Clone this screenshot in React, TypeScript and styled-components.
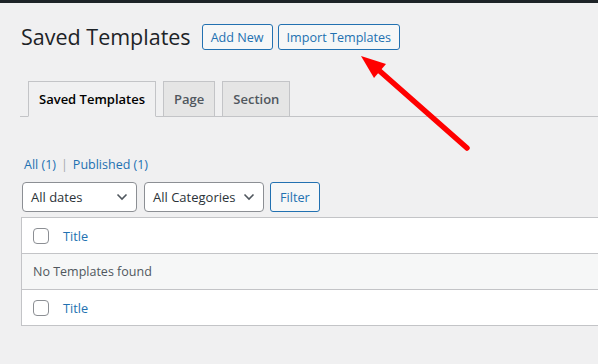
import React from "react";
import styled, { createGlobalStyle, css } from "styled-components";

const Global = createGlobalStyle`
  html, body { margin: 0; padding: 0; background: #f0f0f1; overflow: hidden; }
  body { font-family: "Open Sans", "Noto Sans", sans-serif; color: #3c434a; font-size: 13px; }
  * { box-sizing: border-box; }
`;

const Page = styled.div`
  position: relative;
  width: 598px;
  height: 364px;
  overflow: hidden;
`;

const AdminBar = styled.div`
  height: 3px;
  background: #1d2327;
`;

const Wrap = styled.div`
  padding-left: 20px;
  margin-right: -20px;
`;

const Header = styled.div`
  display: flex;
  align-items: center;
  padding-top: 19px;
  height: 49px;
`;

const Title = styled.h1`
  margin: 0 11px 0 1px;
  font-size: 21.5px;
  font-weight: 400;
  line-height: 30px;
  color: #1d2327;
`;

const ActionButton = styled.a`
  display: inline-flex;
  align-items: center;
  height: 26px;
  padding: 0 8px;
  margin-right: 5px;
  border: 1px solid #2271b1;
  border-radius: 3px;
  background: #f6f7f7;
  color: #2271b1;
  font-size: 12.6px;
  font-weight: 500;
  text-decoration: none;
`;

const Tabs = styled.nav`
  display: flex;
  align-items: flex-end;
  gap: 7px;
  margin-top: 29px;
  padding-left: 8px;
  border-bottom: 1px solid #c3c4c7;
`;

const Tab = styled.a<{ $active?: boolean }>`
  display: block;
  padding: 5px 10px;
  margin-bottom: -1px;
  line-height: 24px;
  font-size: 13px;
  font-weight: 600;
  border: 1px solid #c3c4c7;
  background: #e5e5e5;
  color: #50575e;
  ${(p) =>
    p.$active &&
    css`
      background: #f0f0f1;
      border-bottom-color: #f0f0f1;
      color: #000;
    `}
`;

const SubSubSub = styled.ul`
  list-style: none;
  display: flex;
  align-items: center;
  margin: 38px 0 0 4px;
  padding: 0;
  font-size: 12.5px;
  line-height: 20px;
  color: #2271b1;
`;

const Sep = styled.span`
  color: #a7aaad;
  margin: 0 5px;
`;

const FilterRow = styled.div`
  display: flex;
  align-items: center;
  gap: 7px;
  margin: 7px 0 0 2px;
`;

const Select = styled.div<{ $w: number }>`
  display: flex;
  align-items: center;
  justify-content: space-between;
  width: ${(p) => p.$w}px;
  height: 30px;
  padding: 0 8px 0 8px;
  border: 1px solid #8c8f94;
  border-radius: 4px;
  background: #fff;
  color: #2c3338;
  font-size: 13px;
`;

const FilterButton = styled.button`
  height: 30px;
  padding: 0 9px;
  border: 1px solid #2271b1;
  border-radius: 3px;
  background: #f6f7f7;
  color: #2271b1;
  font-family: inherit;
  font-size: 12.7px;
  margin-left: -1px;
`;

const Table = styled.div`
  margin: 5px 0 0 1px;
  border: 1px solid #c3c4c7;
  background: #fff;
`;

const Row = styled.div<{ $alt?: boolean; $top?: boolean }>`
  display: flex;
  align-items: center;
  height: ${(p) => (p.$top ? 36 : 35)}px;
  padding-left: 11px;
  background: ${(p) => (p.$alt ? "#f6f7f7" : "#fff")};
  border-top: ${(p) => (p.$top ? "1px solid #c3c4c7" : "none")};
  color: #50575e;
  font-size: 12.5px;
`;

const Check = styled.span`
  width: 16px;
  height: 16px;
  border: 1px solid #8c8f94;
  border-radius: 4px;
  background: #fff;
  margin-right: 14px;
`;

const ColLink = styled.a`
  color: #2271b1;
  font-size: 12.7px;
`;

const Arrow = styled.svg`
  position: absolute;
  left: 0;
  top: 0;
  pointer-events: none;
`;

const Chevron = () => (
  <svg width="12" height="8" viewBox="0 0 12 8">
    <path d="M1.5 1.5 L6 6 L10.5 1.5" fill="none" stroke="#50575e" strokeWidth="1.6" />
  </svg>
);

export default function App() {
  return (
    <Page>
      <Global />
      <AdminBar />
      <Wrap>
        <Header>
          <Title>Saved Templates</Title>
          <ActionButton>Add New</ActionButton>
          <ActionButton>Import Templates</ActionButton>
        </Header>
        <Tabs>
          <Tab $active>Saved Templates</Tab>
          <Tab>Page</Tab>
          <Tab>Section</Tab>
        </Tabs>
        <SubSubSub>
          <li>All (1)</li>
          <Sep>|</Sep>
          <li>Published (1)</li>
        </SubSubSub>
        <FilterRow>
          <Select $w={115}>
            All dates
            <Chevron />
          </Select>
          <Select $w={120}>
            All Categories
            <Chevron />
          </Select>
          <FilterButton>Filter</FilterButton>
        </FilterRow>
        <Table>
          <Row>
            <Check />
            <ColLink>Title</ColLink>
          </Row>
          <Row $alt $top>No Templates found</Row>
          <Row $top>
            <Check />
            <ColLink>Title</ColLink>
          </Row>
        </Table>
      </Wrap>
      <Arrow width="598" height="364" viewBox="0 0 598 364">
        <line x1="467" y1="148" x2="374" y2="66" stroke="#f00" strokeWidth="5.5" strokeLinecap="round" />
        <polygon points="361,56 386,64 374,78" fill="#f00" />
      </Arrow>
    </Page>
  );
}
